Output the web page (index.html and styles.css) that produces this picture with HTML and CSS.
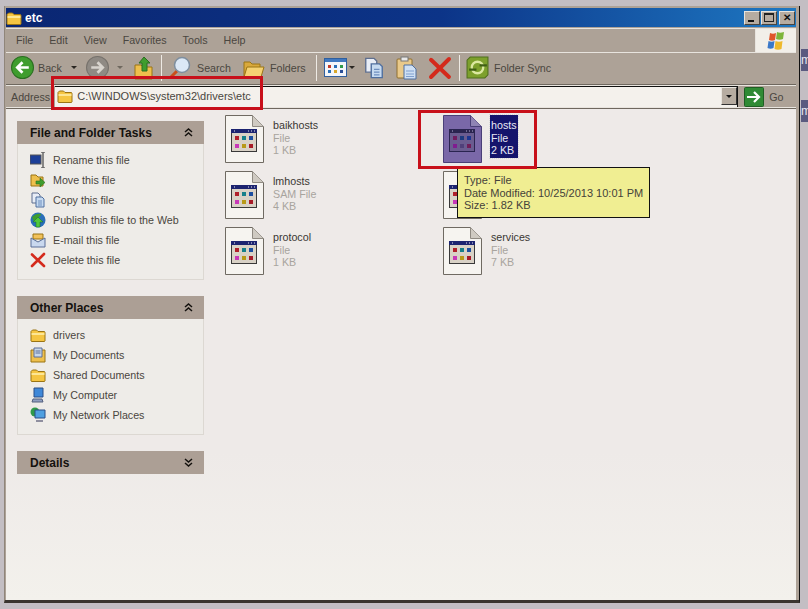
FILE: index.html
```html
<!DOCTYPE html>
<html lang="en">
<head>
  <meta charset="UTF-8">
  <meta name="viewport" content="width=device-width, initial-scale=1.0">
  <title>etc</title>
  <link rel="stylesheet" href="styles.css">
</head>
<body>
  <svg class="defs" width="0" height="0">
    <defs>
      <symbol id="i-folder" viewBox="0 0 16 16">
        <path d="M1 4.500 2.500 3h4L8 4.500h6.500l.5 1V14l-.5.5h-13L1 14z" fill="#f5c542" stroke="#9a7414"/>
        <path d="M1.500 7h13" stroke="#fff1b0" stroke-width="1.500"/>
      </symbol>
      <symbol id="i-file" viewBox="0 0 39 48">
        <path d="M.5.500h27l11 11v36H.5z" fill="#f6f4f0" stroke="#6f6a62"/>
        <path d="M27.500.500v11h11" fill="#cfcac2" stroke="#8f8a82"/>
        <rect x="6" y="14" width="26" height="23" fill="#3a3a3a"/>
        <rect x="6" y="14" width="26" height="4" fill="#1c2470"/>
        <path d="M23 16h1M26 16h1M29 16h1M9 16h1" stroke="#e8e8f0"/>
        <rect x="7" y="18" width="24" height="18" fill="#d9d2c6"/>
        <g>
          <rect x="10" y="21" width="4" height="4" fill="#b0202a"/><rect x="17" y="21" width="4" height="4" fill="#16808a"/><rect x="24" y="21" width="4" height="4" fill="#1c4fa0"/>
          <rect x="10" y="29" width="4" height="4" fill="#c838b8"/><rect x="17" y="29" width="4" height="4" fill="#b89a18"/><rect x="24" y="29" width="4" height="4" fill="#a81c28"/>
        </g>
      </symbol>
      <symbol id="i-file-sel" viewBox="0 0 39 48">
        <path d="M.5.500h27l11 11v36H.5z" fill="#7a68a8" stroke="#4a3f78"/>
        <path d="M27.500.500v11h11" fill="#8f84b4" stroke="#4a3f78"/>
        <rect x="6" y="14" width="26" height="23" fill="#2a2450"/>
        <path d="M23 16h1M26 16h1M29 16h1M9 16h1" stroke="#b0a8d0"/>
        <rect x="7" y="18" width="24" height="18" fill="#6a5c90"/>
        <g>
          <rect x="10" y="21" width="4" height="4" fill="#701c60"/><rect x="17" y="21" width="4" height="4" fill="#1c3a80"/><rect x="24" y="21" width="4" height="4" fill="#1c3490"/>
          <rect x="10" y="29" width="4" height="4" fill="#801c90"/><rect x="17" y="29" width="4" height="4" fill="#50407a"/><rect x="24" y="29" width="4" height="4" fill="#701c58"/>
        </g>
      </symbol>
      <symbol id="i-x" viewBox="0 0 16 16">
        <path d="M2 2.500 14 14M14 2 2 14" stroke="#d42a1c" stroke-width="2.600" stroke-linecap="round"/>
      </symbol>
      <symbol id="i-copy" viewBox="0 0 16 16">
        <path d="M2 1h6l2 2v8H2z" fill="#e8edf6" stroke="#5f6f8f"/>
        <path d="M6 5h6l2 2v8H6z" fill="#c6daf0" stroke="#4f6f9f"/>
        <path d="M8 9h4M8 11h4M8 13h4" stroke="#6f8fbf"/>
      </symbol>
      <symbol id="i-paste" viewBox="0 0 22 24">
        <rect x="1" y="3" width="15" height="19" rx="1" fill="#e9c98a" stroke="#8f6f2f"/>
        <rect x="5" y="1" width="7" height="4" fill="#e8e8e8" stroke="#777"/>
        <path d="M8 9h8l4 4v10H8z" fill="#cfe0f4" stroke="#4f6f9f"/>
        <path d="M10 15h8M10 18h8M10 20.500h8" stroke="#7f9fcf"/>
      </symbol>
      <symbol id="i-collapse" viewBox="0 0 9 9">
        <path d="M1 4 4.500 1 8 4M1 8l3.500-3L8 8" fill="none" stroke="#14110e" stroke-width="1.500"/>
      </symbol>
      <symbol id="i-expand" viewBox="0 0 9 9">
        <path d="M1 1l3.500 3L8 1M1 5l3.500 3L8 5" fill="none" stroke="#14110e" stroke-width="1.500"/>
      </symbol>
    </defs>
  </svg>

  <div class="window">
    <div class="titlebar">
      <svg class="title-icon"><use href="#i-folder"/></svg>
      <span class="title-text">etc</span>
      <div class="caption-btns">
        <div class="caption-btn"><span class="glyph-min"></span></div>
        <div class="caption-btn"><span class="glyph-max"></span></div>
        <div class="caption-btn glyph-close">&#x2715;</div>
      </div>
    </div>

    <div class="menubar">
      <div class="menu-items">
        <span>File</span><span>Edit</span><span>View</span><span>Favorites</span><span>Tools</span><span>Help</span>
      </div>
      <div class="winlogo">
        <svg width="20" height="20" viewBox="0 0 20 20">
          <path d="M4 2c2 1 4 1 6 0l-1 7c-2 1-4 1-6 0z" fill="#e0562a"/>
          <path d="M11 1c2 1 4 1 7 0l-1 7c-2 1-5 1-7 0z" fill="#7eb53a"/>
          <path d="M2.500 10c2 1 4 1 6 0l-1 7c-2 1-4 1-6 0z" fill="#3a78c8"/>
          <path d="M9.500 10c2 1 5 1 7 0l-1 8c-2 1-5 1-7 0z" fill="#eeb92c"/>
        </svg>
      </div>
    </div>

    <div class="toolbar">
      <svg class="tb-round" viewBox="0 0 22 22">
        <circle cx="11" cy="11" r="10.500" fill="#3f9d2e" stroke="#2a6f20"/>
        <path d="M17 11H7M11 6l-5 5 5 5" fill="none" stroke="#fff" stroke-width="2.600"/>
      </svg>
      <span class="tb-label back-label">Back</span>
      <span class="caret back-caret"></span>
      <svg class="tb-round forward" viewBox="0 0 22 22">
        <circle cx="11" cy="11" r="10.500" fill="#8f8a84" stroke="#77726c"/>
        <path d="M5 11h10M11 6l5 5-5 5" fill="none" stroke="#d8d4ce" stroke-width="2.600"/>
      </svg>
      <span class="caret forward-caret"></span>
      <svg class="tb-up" viewBox="0 0 20 24">
        <path d="M1 9h6l2 2h9v12H1z" fill="#eebf4c" stroke="#9a7414"/>
        <path d="M10 1l6 6h-3v8H8V7H5z" fill="#3f9d2e" stroke="#2a6f20"/>
      </svg>
      <span class="tb-sep sep-one"></span>
      <svg class="tb-search" viewBox="0 0 24 24">
        <path d="M9 15 2 22" stroke="#c9501c" stroke-width="3"/>
        <circle cx="14" cy="9" r="7.500" fill="#dbe8f6" stroke="#7f8f9f" stroke-width="1.500"/>
      </svg>
      <span class="tb-label search-label">Search</span>
      <svg class="tb-folders" viewBox="0 0 22 20">
        <path d="M1 4h6l2 2h8v12H1z" fill="#d9a93c" stroke="#9a7414"/>
        <path d="M4 9h17l-3 10H1z" fill="#f5d272" stroke="#9a7414"/>
      </svg>
      <span class="tb-label folders-label">Folders</span>
      <span class="tb-sep sep-two"></span>
      <svg class="tb-views" viewBox="0 0 23 19">
        <rect x=".5" y=".5" width="22" height="18" fill="#f4f6fa" stroke="#2f5f9f"/>
        <rect x="1" y="1" width="21" height="3" fill="#3f78c0"/>
        <path d="M4 7h3v3H4z" fill="#c23a2a"/><path d="M10 7h3v3h-3z" fill="#2a6fb8"/><path d="M16 7h3v3h-3z" fill="#2f9a4a"/>
        <path d="M4 12h3v3H4z" fill="#2a6fb8"/><path d="M10 12h3v3h-3z" fill="#d8a82a"/><path d="M16 12h3v3h-3z" fill="#2a4f98"/>
      </svg>
      <span class="caret views-caret"></span>
      <svg class="tb-copy"><use href="#i-copy"/></svg>
      <svg class="tb-paste"><use href="#i-paste"/></svg>
      <svg class="tb-delete"><use href="#i-x"/></svg>
      <span class="tb-sep sep-three"></span>
      <svg class="tb-sync" viewBox="0 0 22 22">
        <path d="M4 1h17v17l-3 3H1V4z" fill="#7da02c" stroke="#4f6f1c"/>
        <circle cx="11" cy="11" r="5.500" fill="none" stroke="#dbe8a0" stroke-width="2.200"/>
        <path d="M13 9h7M3 13h7" stroke="#3f5f14" stroke-width="2"/>
      </svg>
      <span class="tb-label sync-label">Folder Sync</span>
    </div>

    <div class="addressbar">
      <span class="address-label">Address</span>
      <div class="address-field">
        <svg class="address-icon"><use href="#i-folder"/></svg>
        <span class="address-path">C:\WINDOWS\system32\drivers\etc</span>
        <span class="address-drop"><span class="caret dark"></span></span>
      </div>
      <svg class="go-icon" viewBox="0 0 20 20">
        <rect x=".5" y=".5" width="19" height="19" rx="1" fill="#2f8a34" stroke="#1f5f24"/>
        <path d="M3 10h12M10 5l5 5-5 5" fill="none" stroke="#fff" stroke-width="2.200"/>
      </svg>
      <span class="go-label">Go</span>
    </div>

    <div class="content">
      <div class="sidebar">
        <section class="panel">
          <h3 class="panel-head">File and Folder Tasks <svg class="chevrons"><use href="#i-collapse"/></svg></h3>
          <ul class="panel-body">
            <li>
              <svg viewBox="0 0 16 16"><rect x="0" y="3" width="11" height="9" fill="#1c3f98" stroke="#555"/><path d="M13 0v16M11 0h4M11 16h4" stroke="#666" stroke-width="1.500"/></svg>
              Rename this file
            </li>
            <li>
              <svg viewBox="0 0 16 16"><path d="M1 3h5l2 2h5v9H1z" fill="#eebf4c" stroke="#9a7414"/><path d="M6 9h4V6l5 4.500-5 4.500v-3H6z" fill="#3f9d2e" stroke="#2a6f20" stroke-width=".6"/></svg>
              Move this file
            </li>
            <li><svg><use href="#i-copy"/></svg>Copy this file</li>
            <li>
              <svg viewBox="0 0 16 16"><circle cx="8" cy="8" r="7.500" fill="#2a6fb8"/><path d="M2 5c3-3 6-4 9-3 0 3-4 3-5 6s-3 1-4-3z" fill="#3f9d2e"/><path d="M8 5l5 5h-3v5H6v-5H3z" fill="#4fc83a" stroke="#1f6f20" stroke-width=".5"/></svg>
              Publish this file to the Web
            </li>
            <li>
              <svg viewBox="0 0 16 16"><path d="M3 7V2h10v5z" fill="#f2c25a" stroke="#9a7414"/><path d="M1 6l7 4 7-4v9H1z" fill="#c9d8ee" stroke="#5a6f98"/></svg>
              E-mail this file
            </li>
            <li><svg><use href="#i-x"/></svg>Delete this file</li>
          </ul>
        </section>

        <section class="panel">
          <h3 class="panel-head">Other Places <svg class="chevrons"><use href="#i-collapse"/></svg></h3>
          <ul class="panel-body">
            <li><svg><use href="#i-folder"/></svg>drivers</li>
            <li>
              <svg viewBox="0 0 16 16"><path d="M1 3h14v12H1z" fill="#eebf4c" stroke="#9a7414"/><path d="M4 1h8v9H4z" fill="#c6d6ea" stroke="#5a6f98"/><path d="M5.500 4h5M5.500 6h5" stroke="#5a6f98"/></svg>
              My Documents
            </li>
            <li><svg><use href="#i-folder"/></svg>Shared Documents</li>
            <li>
              <svg viewBox="0 0 16 16"><path d="M4 1h9v9H4z" fill="#3f88d8" stroke="#2a4f88"/><path d="M3 12h9l1 3H2z" fill="#8f9fc0" stroke="#55607f"/></svg>
              My Computer
            </li>
            <li>
              <svg viewBox="0 0 16 16"><circle cx="5" cy="5" r="4.500" fill="#2f9a4a"/><path d="M5 3h10v8H5z" fill="#4fa0e0" stroke="#2a4f88"/><path d="M6 13h7v2H6z" fill="#8f8f9f"/></svg>
              My Network Places
            </li>
          </ul>
        </section>

        <section class="panel">
          <h3 class="panel-head">Details <svg class="chevrons"><use href="#i-expand"/></svg></h3>
        </section>
      </div>

      <div class="files">
        <div class="file">
          <svg class="file-icon"><use href="#i-file"/></svg>
          <div class="file-text"><div class="file-name">baikhosts</div><div>File</div><div>1 KB</div></div>
        </div>
        <div class="file selected">
          <svg class="file-icon"><use href="#i-file-sel"/></svg>
          <div class="file-text"><div class="file-name">hosts</div><div>File</div><div>2 KB</div></div>
        </div>
        <div class="file">
          <svg class="file-icon"><use href="#i-file"/></svg>
          <div class="file-text"><div class="file-name">lmhosts</div><div>SAM File</div><div>4 KB</div></div>
        </div>
        <div class="file">
          <svg class="file-icon"><use href="#i-file"/></svg>
        </div>
        <div class="file">
          <svg class="file-icon"><use href="#i-file"/></svg>
          <div class="file-text"><div class="file-name">protocol</div><div>File</div><div>1 KB</div></div>
        </div>
        <div class="file">
          <svg class="file-icon"><use href="#i-file"/></svg>
          <div class="file-text"><div class="file-name">services</div><div>File</div><div>7 KB</div></div>
        </div>
      </div>
    </div>

    <div class="tooltip">
      <div>Type: File</div>
      <div>Date Modified: 10/25/2013 10:01 PM</div>
      <div>Size: 1.82 KB</div>
    </div>
    <div class="mark mark-address"></div>
    <div class="mark mark-hosts"></div>
  </div>

  <div class="edge-tab tab-one">m</div>
  <div class="edge-tab tab-two">m</div>
</body>
</html>
```

FILE: styles.css
```css
* {
  box-sizing: border-box;
}
html, body {
  height: 100%;
}
body {
  margin: 0;
  overflow: hidden;
  position: relative;
  background-color: #c3bec3;
  font-family: "Liberation Sans", Arial, sans-serif;
  font-size: 10.700px;
  color: #4a4640;
}
.defs {
  position: absolute;
}
svg {
  display: block;
  flex: none;
}

/* window */
.window {
  position: relative;
  width: 796px;
  height: 597px;
  margin: 6px 0 0 4px;
  padding: 2px 3px 0 1px;
  display: flex;
  flex-direction: column;
  background-color: #ada297;
  border-left: 1px solid #8f857a;
  border-right: 1px solid #111;
  border-bottom: 3px solid #3a352f;
}

.titlebar {
  height: 19px;
  display: flex;
  align-items: center;
  background: linear-gradient(to right, #0a2672 0%, #0c3488 55%, #1e78c2 100%);
}
.title-icon {
  width: 16px;
  height: 16px;
}
.title-text {
  margin-left: 3px;
  color: #fff;
  font-weight: bold;
  font-size: 12px;
}
.caption-btns {
  margin-left: auto;
  margin-right: 1px;
  display: flex;
  gap: 1px;
}
.caption-btn {
  width: 16px;
  height: 14px;
  background-color: #b6aca1;
  border: 1px solid;
  border-color: #e8e4de #4a453f #4a453f #e8e4de;
  position: relative;
  color: #111;
  font-size: 10px;
  font-weight: bold;
  line-height: 12px;
  text-align: center;
}
.glyph-close {
  margin-left: 1px;
}
.glyph-min {
  position: absolute;
  left: 3px;
  bottom: 2px;
  width: 6px;
  height: 2px;
  background-color: #111;
}
.glyph-max {
  position: absolute;
  left: 2px;
  top: 1px;
  width: 10px;
  height: 9px;
  border: 1px solid #222;
  border-top-width: 2px;
}

.menubar {
  height: 25px;
  margin-top: 1px;
  display: flex;
  border-top: 1px solid #e8e4de;
  border-bottom: 1px solid #e8e4de;
}
.menu-items {
  flex: 1;
  display: flex;
  align-items: center;
  padding: 0 0 2px 10px;
  border-right: 1px solid #e8e4de;
}
.menu-items span {
  margin-right: 16px;
}
.winlogo {
  width: 40px;
  display: flex;
  align-items: center;
  justify-content: center;
  background-color: #f2efe9;
}

.toolbar {
  height: 32px;
  padding-bottom: 2px;
  display: flex;
  align-items: center;
  border-bottom: 1px solid #6f685f;
}
.tb-round {
  width: 23px;
  height: 23px;
  margin-left: 5px;
}
.tb-round.forward {
  margin-left: 0;
}
.back-label {
  margin-left: 4px;
  width: 29px;
}
.caret {
  width: 0;
  height: 0;
  flex: none;
  border-left: 3px solid transparent;
  border-right: 3px solid transparent;
  border-top: 3px solid #2a2622;
}
.caret.dark {
  display: block;
  border-top-color: #111;
}
.back-caret {
  margin: 0 9px 0 4px;
}
.forward-caret {
  margin-left: 8px;
  border-top-color: #6f685f;
}
.tb-up {
  width: 20px;
  height: 24px;
  margin-left: 11px;
}
.tb-sep {
  width: 1px;
  height: 26px;
  background-color: #eeeae4;
}
.sep-one {
  margin-left: 7px;
}
.tb-search {
  width: 24px;
  height: 24px;
  margin-left: 6px;
}
.search-label {
  margin-left: 5px;
  width: 46px;
}
.tb-folders {
  width: 22px;
  height: 20px;
}
.folders-label {
  margin-left: 5px;
  width: 46px;
}
.tb-views {
  width: 23px;
  height: 19px;
  margin-left: 7px;
}
.views-caret {
  margin-left: 2px;
}
.tb-copy {
  width: 22px;
  height: 22px;
  margin-left: 8px;
}
.tb-paste {
  width: 22px;
  height: 24px;
  margin-left: 11px;
}
.tb-delete {
  width: 24px;
  height: 24px;
  margin-left: 10px;
}
.sep-three {
  margin-left: 7px;
}
.tb-sync {
  width: 23px;
  height: 23px;
  margin-left: 6px;
}
.sync-label {
  margin-left: 5px;
}

.addressbar {
  height: 23px;
  display: flex;
  align-items: center;
  border-top: 1px solid #e8e4de;
  border-bottom: 1px solid #e8e4de;
}
.address-label {
  margin-left: 5px;
}
.address-field {
  width: 683px;
  height: 21px;
  margin-left: 5px;
  padding: 0 0 2px 2px;
  display: flex;
  align-items: center;
  background-color: #f4f1ec;
  border-top: 1px solid #111;
  border-right: 1px solid #111;
}
.address-icon {
  width: 16px;
  height: 16px;
}
.address-path {
  margin-left: 4px;
  font-size: 11px;
}
.address-drop {
  margin-left: auto;
  width: 16px;
  height: 18px;
  display: flex;
  align-items: center;
  justify-content: center;
  background-color: #b6aca1;
  border: 1px solid;
  border-color: #e8e4de #333 #333 #e8e4de;
}
.go-icon {
  width: 20px;
  height: 20px;
  margin-left: 6px;
}
.go-label {
  margin-left: 5px;
}

/* content */
.content {
  flex: 1;
  display: flex;
  background: linear-gradient(to bottom, #eeeae8 70%, #f3f1ec 100%);
  border-top: 1px solid #6f685f;
}
.sidebar {
  width: 198px;
  padding: 12px 0 0 11px;
  display: flex;
  flex-direction: column;
  gap: 16px;
}
.panel-head {
  height: 23px;
  margin: 0;
  padding: 0 11px 0 13px;
  display: flex;
  align-items: center;
  justify-content: space-between;
  background-color: #ac9f95;
  color: #14110e;
  font-size: 12px;
  font-weight: bold;
}
.chevrons {
  width: 9px;
  height: 9px;
}
.panel-body {
  margin: 0;
  padding: 6px 0 9px 12px;
  list-style: none;
  background-color: #eeece8;
  border: 1px solid #dcd8d2;
  border-top: 0;
}
.panel-body li {
  height: 20px;
  display: flex;
  align-items: center;
  gap: 7px;
}
.panel-body svg {
  width: 16px;
  height: 16px;
}

.files {
  margin-left: 21px;
  padding-top: 6px;
  display: grid;
  grid-template-columns: 218px 218px;
  grid-auto-rows: 56px;
}
.file {
  display: flex;
  gap: 9px;
}
.file-icon {
  width: 39px;
  height: 48px;
}
.file-text {
  padding-top: 4px;
  line-height: 12.500px;
  color: #a8a49e;
  height: fit-content;
}
.file-name {
  color: #3a3733;
}
.selected .file-text {
  margin-left: -1px;
  padding: 4px 1px 1px;
  background-color: #14146c;
  color: #e8e8f4;
  outline: 1px dotted #d8d8d8;
}
.selected .file-name {
  color: #e8e8f4;
}

/* overlays */
.tooltip {
  position: absolute;
  left: 452px;
  top: 161px;
  width: 193px;
  height: 51px;
  padding: 6px 0 0 6px;
  background-color: #f0ee92;
  border: 1px solid #111;
  color: #45423a;
  font-size: 11px;
  line-height: 12.500px;
  white-space: nowrap;
}
.mark {
  position: absolute;
  border: 3px solid #c8101a;
}
.mark-address {
  left: 46px;
  top: 70px;
  width: 212px;
  height: 34px;
}
.mark-hosts {
  left: 413px;
  top: 104px;
  width: 119px;
  height: 59px;
}
.edge-tab {
  position: absolute;
  left: 801px;
  width: 7px;
  height: 22px;
  background-color: #5a5a80;
  color: #e8e8f0;
  font-size: 12px;
  line-height: 22px;
  overflow: hidden;
}
.tab-one {
  top: 49px;
}
.tab-two {
  top: 100px;
}
```
